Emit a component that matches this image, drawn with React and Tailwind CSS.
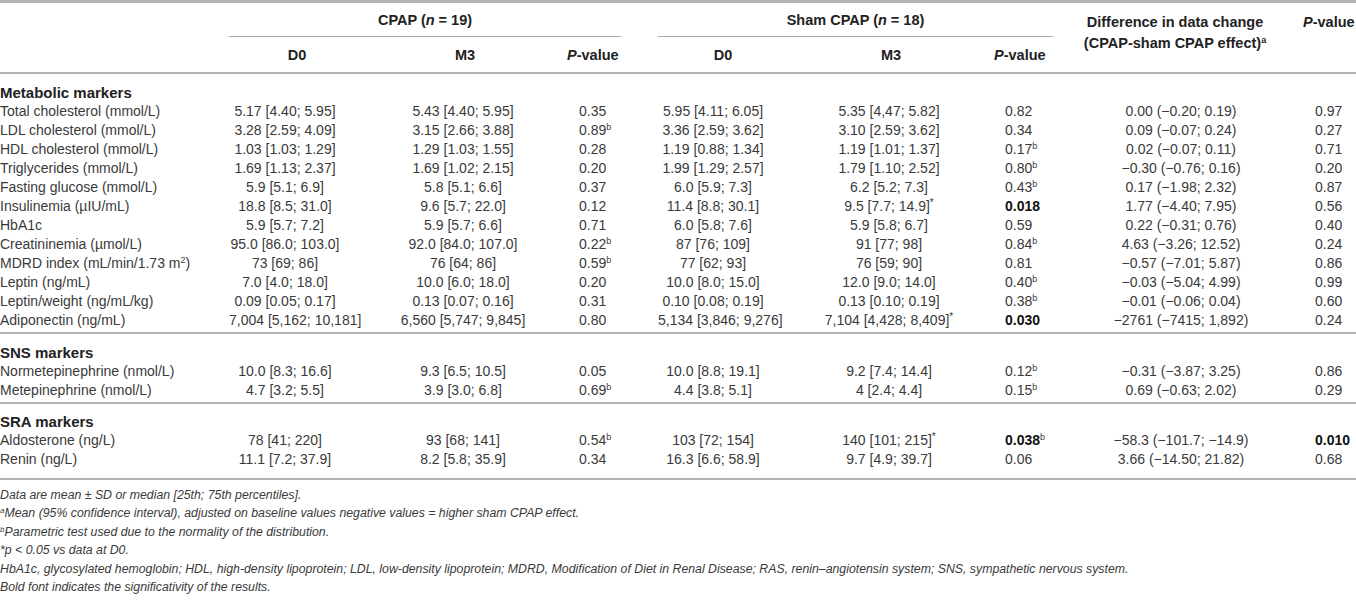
const cols = "grid grid-cols-[229px_136px_200px_93px_130px_206px_66px_230px_66px]";

const sections = [
  {
    title: "Metabolic markers",
    rows: [
      ["Total cholesterol (mmol/L)", "5.17 [4.40; 5.95]", "5.43 [4.40; 5.95]", "0.35", "5.95 [4.11; 6.05]", "5.35 [4,47; 5.82]", "0.82", "0.00 (−0.20; 0.19)", "0.97"],
      ["LDL cholesterol (mmol/L)", "3.28 [2.59; 4.09]", "3.15 [2.66; 3.88]", "0.89^b", "3.36 [2.59; 3.62]", "3.10 [2.59; 3.62]", "0.34", "0.09 (−0.07; 0.24)", "0.27"],
      ["HDL cholesterol (mmol/L)", "1.03 [1.03; 1.29]", "1.29 [1.03; 1.55]", "0.28", "1.19 [0.88; 1.34]", "1.19 [1.01; 1.37]", "0.17^b", "0.02 (−0.07; 0.11)", "0.71"],
      ["Triglycerides (mmol/L)", "1.69 [1.13; 2.37]", "1.69 [1.02; 2.15]", "0.20", "1.99 [1.29; 2.57]", "1.79 [1.10; 2.52]", "0.80^b", "−0.30 (−0.76; 0.16)", "0.20"],
      ["Fasting glucose (mmol/L)", "5.9 [5.1; 6.9]", "5.8 [5.1; 6.6]", "0.37", "6.0 [5.9; 7.3]", "6.2 [5.2; 7.3]", "0.43^b", "0.17 (−1.98; 2.32)", "0.87"],
      ["Insulinemia (µIU/mL)", "18.8 [8.5; 31.0]", "9.6 [5.7; 22.0]", "0.12", "11.4 [8.8; 30.1]", "9.5 [7.7; 14.9]^*", "!0.018", "1.77 (−4.40; 7.95)", "0.56"],
      ["HbA1c", "5.9 [5.7; 7.2]", "5.9 [5.7; 6.6]", "0.71", "6.0 [5.8; 7.6]", "5.9 [5.8; 6.7]", "0.59", "0.22 (−0.31; 0.76)", "0.40"],
      ["Creatininemia (µmol/L)", "95.0 [86.0; 103.0]", "92.0 [84.0; 107.0]", "0.22^b", "87 [76; 109]", "91 [77; 98]", "0.84^b", "4.63 (−3.26; 12.52)", "0.24"],
      ["MDRD index (mL/min/1.73 m^2)", "73 [69; 86]", "76 [64; 86]", "0.59^b", "77 [62; 93]", "76 [59; 90]", "0.81", "−0.57 (−7.01; 5.87)", "0.86"],
      ["Leptin (ng/mL)", "7.0 [4.0; 18.0]", "10.0 [6.0; 18.0]", "0.20", "10.0 [8.0; 15.0]", "12.0 [9.0; 14.0]", "0.40^b", "−0.03 (−5.04; 4.99)", "0.99"],
      ["Leptin/weight (ng/mL/kg)", "0.09 [0.05; 0.17]", "0.13 [0.07; 0.16]", "0.31", "0.10 [0.08; 0.19]", "0.13 [0.10; 0.19]", "0.38^b", "−0.01 (−0.06; 0.04)", "0.60"],
      ["Adiponectin (ng/mL)", "7,004 [5,162; 10,181]", "6,560 [5,747; 9,845]", "0.80", "5,134 [3,846; 9,276]", "7,104 [4,428; 8,409]^*", "!0.030", "−2761 (−7415; 1,892)", "0.24"],
    ],
  },
  {
    title: "SNS markers",
    rows: [
      ["Normetepinephrine (nmol/L)", "10.0 [8.3; 16.6]", "9.3 [6.5; 10.5]", "0.05", "10.0 [8.8; 19.1]", "9.2 [7.4; 14.4]", "0.12^b", "−0.31 (−3.87; 3.25)", "0.86"],
      ["Metepinephrine (nmol/L)", "4.7 [3.2; 5.5]", "3.9 [3.0; 6.8]", "0.69^b", "4.4 [3.8; 5.1]", "4 [2.4; 4.4]", "0.15^b", "0.69 (−0.63; 2.02)", "0.29"],
    ],
  },
  {
    title: "SRA markers",
    last: true,
    rows: [
      ["Aldosterone (ng/L)", "78 [41; 220]", "93 [68; 141]", "0.54^b", "103 [72; 154]", "140 [101; 215]^*", "!0.038^b", "−58.3 (−101.7; −14.9)", "!0.010"],
      ["Renin (ng/L)", "11.1 [7.2; 37.9]", "8.2 [5.8; 35.9]", "0.34", "16.3 [6.6; 58.9]", "9.7 [4.9; 39.7]", "0.06", "3.66 (−14.50; 21.82)", "0.68"],
    ],
  },
];

// column alignment for body cells
const cellCls = [
  "text-left",
  "text-center pr-[24px]",
  "text-center pr-[4px]",
  "text-left pl-[14px]",
  "text-center pr-[20px]",
  "text-center pr-[4px]",
  "text-left pl-[11px]",
  "text-center pl-[12px]",
  "text-left pl-[25px]",
];

// "!" = bold value, "^x" = one superscript character
function Val({ v }) {
  let bold = false;
  let s = v;
  if (s.startsWith("!")) {
    bold = true;
    s = s.slice(1);
  }
  const i = s.indexOf("^");
  const main = i >= 0 ? s.slice(0, i) : s;
  const sup = i >= 0 ? s[i + 1] : null;
  const rest = i >= 0 ? s.slice(i + 2) : "";
  return (
    <>
      <span className={bold ? "font-bold text-[#111]" : ""}>{main}</span>
      {sup && <sup className={sup === "*" ? "text-[10px] top-[-5px]" : "text-[9px] top-[-5px]"}>{sup}</sup>}
      {rest}
    </>
  );
}

const PVal = () => (
  <span className="font-bold">
    <i>P</i>-value
  </span>
);

function Header() {
  return (
    <div className="border-t-[3px] border-b-2 border-[#b3b3b3] text-[14.5px]">
      <div className={cols + " font-bold text-[#222]"}>
        <div className="row-span-2" />
        <div className="col-span-3 mr-[37px] border-b border-[#a8a8a8] h-[34px] flex items-center justify-center pt-[3px]">
          <span>
            CPAP (<i>n</i> = 19)
          </span>
        </div>
        <div className="col-span-3 mr-[7px] border-b border-[#a8a8a8] h-[34px] flex items-center justify-center pt-[3px]">
          <span>
            Sham CPAP (<i>n</i> = 18)
          </span>
        </div>
        <div className="row-span-2 text-center pt-[9px] leading-[21px] whitespace-nowrap">
          Difference in data change
          <br />
          (CPAP-sham CPAP effect)<sup className="text-[9px] top-[-5px]">a</sup>
        </div>
        <div className="row-span-2 pl-[13px] pt-[9px] leading-[21px] whitespace-nowrap">
          <PVal />
        </div>
        <div className="h-[35px] flex items-center justify-center pt-[3px]">D0</div>
        <div className="h-[35px] flex items-center justify-center pt-[3px]">M3</div>
        <div className="h-[35px] flex items-center pl-[2px] pt-[3px]">
          <PVal />
        </div>
        <div className="h-[35px] flex items-center justify-center pt-[3px]">D0</div>
        <div className="h-[35px] flex items-center justify-center pt-[3px]">M3</div>
        <div className="h-[35px] flex items-center pt-[3px]">
          <PVal />
        </div>
      </div>
    </div>
  );
}

export default function App() {
  return (
    <div className="w-[1356px] h-[603px] bg-white overflow-hidden text-[14px] text-[#3a3a3a] font-['Liberation_Sans',Arial,sans-serif]">
      <Header />
      {sections.map((sec) => (
        <div
          key={sec.title}
          className={(sec.last ? "pt-[8px] pb-[9px]" : "pt-[9px] pb-[2px]") + " border-b-2 border-[#b3b3b3] leading-[19px]"}
        >
          <div className="font-bold text-[15px] text-[#222]">{sec.title}</div>
          {sec.rows.map((r) => (
            <div key={r[0]} className={cols + " whitespace-nowrap"}>
              {r.map((v, j) => (
                <div key={j} className={cellCls[j]}>
                  <Val v={v} />
                </div>
              ))}
            </div>
          ))}
        </div>
      ))}
      <div className="pt-[6px] italic text-[12.3px] leading-[18.4px] text-[#3a3a3a]">
        <p>Data are mean ± SD or median [25th; 75th percentiles].</p>
        <p>
          <sup className="text-[8px] top-[-4px]">a</sup>Mean (95% confidence interval), adjusted on baseline values negative values = higher sham CPAP effect.
        </p>
        <p>
          <sup className="text-[8px] top-[-4px]">b</sup>Parametric test used due to the normality of the distribution.
        </p>
        <p>*p &lt; 0.05 vs data at D0.</p>
        <p>
          HbA1c, glycosylated hemoglobin; HDL, high-density lipoprotein; LDL, low-density lipoprotein; MDRD, Modification of Diet in Renal Disease; RAS, renin–angiotensin system; SNS, sympathetic nervous system.
        </p>
        <p>Bold font indicates the significativity of the results.</p>
      </div>
    </div>
  );
}
